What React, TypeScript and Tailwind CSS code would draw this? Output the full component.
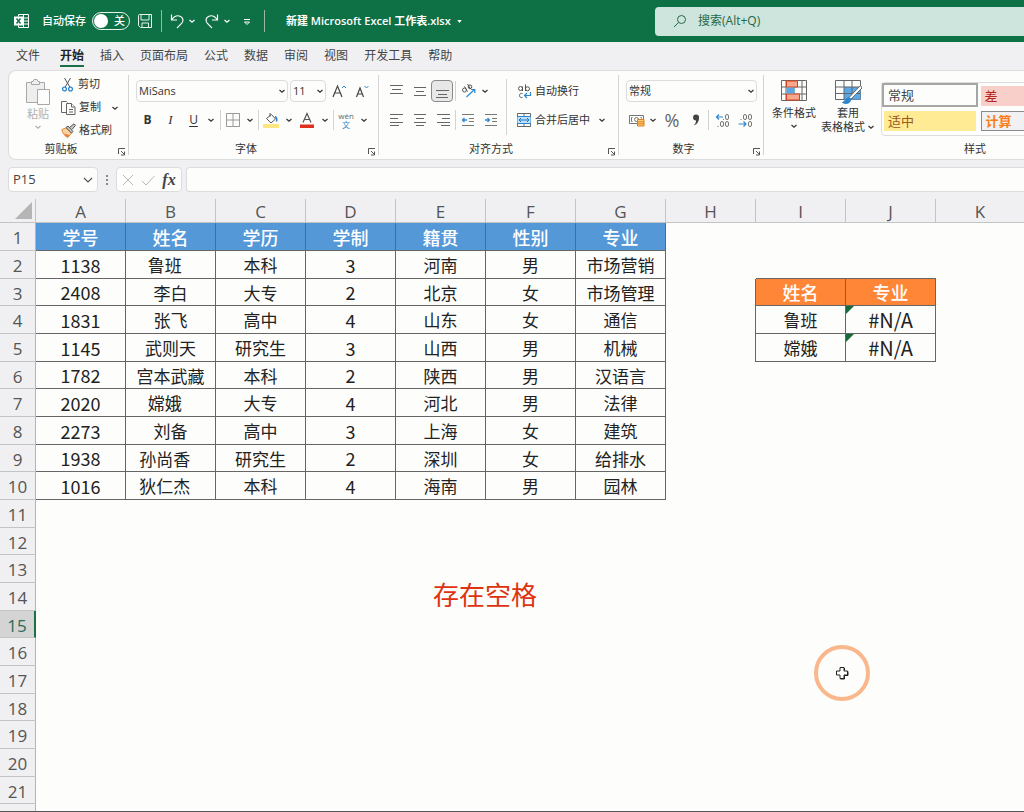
import clsx from 'clsx';
import { ReactNode, useState } from 'react';

const tabs = ['文件', '开始', '插入', '页面布局', '公式', '数据', '审阅', '视图', '开发工具', '帮助'];

const columns = ['A', 'B', 'C', 'D', 'E', 'F', 'G', 'H', 'I', 'J', 'K'];

// Trailing spaces are part of the data: they are why the lookup fails.
const students = [
    ['学号', '姓名', '学历', '学制', '籍贯', '性别', '专业'],
    ['1138', '鲁班   ', '本科', '3', '河南', '男', '市场营销'],
    ['2408', '李白', '大专', '2', '北京', '女', '市场管理'],
    ['1831', '张飞', '高中', '4', '山东', '女', '通信'],
    ['1145', '武则天', '研究生', '3', '山西', '男', '机械'],
    ['1782', '宫本武藏', '本科', '2', '陕西', '男', '汉语言'],
    ['2020', '嫦娥   ', '大专', '4', '河北', '男', '法律'],
    ['2273', '刘备', '高中', '3', '上海', '女', '建筑'],
    ['1938', '孙尚香   ', '研究生', '2', '深圳', '女', '给排水'],
    ['1016', '狄仁杰   ', '本科', '4', '海南', '男', '园林'],
];

const lookup = [
    ['姓名', '专业'],
    ['鲁班', '#N/A'],
    ['嫦娥', '#N/A'],
];

const rowNumbers = Array.from({ length: 21 }, (_, i) => i + 1);

// row is 1-based, col is 0-based
function getCell(row: number, col: number): string | undefined {
    return students[row - 1]?.[col] ?? lookup[row - 3]?.[col - 8];
}

function Chevron({ className }: { className?: string }) {
    return (
        <svg viewBox="0 0 8 8" className={clsx('h-2 w-2 shrink-0', className)} fill="none" stroke="currentColor" strokeWidth="1.2">
            <path d="M1.5 3 4 5.3 6.5 3" />
        </svg>
    );
}

function Divider({ className }: { className?: string }) {
    return <span className={clsx('w-px shrink-0 bg-[#d4d4d4]', className ?? 'h-5')} />;
}

function ToolButton({
    label,
    className,
    children,
}: {
    label: string;
    className?: string;
    children: ReactNode;
}) {
    return (
        <button
            type="button"
            aria-label={label}
            className={clsx('flex h-[22px] shrink-0 items-center justify-center rounded', className ?? 'w-[23px]')}
        >
            {children}
        </button>
    );
}

function More({ label, className }: { label: string; className?: string }) {
    return (
        <ToolButton label={label} className={className ?? 'w-3'}>
            <Chevron />
        </ToolButton>
    );
}

function SelectBox({ label, value, className }: { label: string; value: string; className: string }) {
    return (
        <div className={clsx('relative shrink-0', className)}>
            <select
                aria-label={label}
                defaultValue={value}
                className="h-[22px] w-full appearance-none rounded border border-[#dcdcdc] bg-[#fdfdfb] pl-[2px] outline-none"
            >
                <option>{value}</option>
            </select>
            <Chevron className="pointer-events-none absolute top-[7px] right-[2px]" />
        </div>
    );
}

function Group({
    title,
    className,
    launcher = true,
    children,
}: {
    title: string;
    className: string;
    launcher?: boolean;
    children: ReactNode;
}) {
    return (
        <section className={clsx('flex shrink-0', className)}>
            <div className="flex min-w-0 flex-1 flex-col pt-2">
                <div className="h-[60px]">{children}</div>
                <div className="flex h-5 items-center">
                    <span className="flex-1 pr-1 text-center">{title}</span>
                    {launcher && (
                        <button type="button" aria-label={`${title}设置`} className="mt-1 mr-[2px]">
                            <svg viewBox="0 0 9 9" className="h-[9px] w-[9px]" fill="none" stroke="#555">
                                <path d="M1.5 7V1.5H8M4 4l3.5 3.5M7.5 4.5v3.5H4" />
                            </svg>
                        </button>
                    )}
                </div>
            </div>
            {launcher && <Divider className="my-1 h-auto" />}
        </section>
    );
}

function Lines({ rows }: { rows: string }) {
    return (
        <svg viewBox="0 0 14 14" className="h-[14px] w-[14px]" fill="none" stroke="#666">
            <path d={rows} />
        </svg>
    );
}

function TitleBar() {
    const [autoSave, setAutoSave] = useState(false);

    return (
        <header className="flex h-[42px] shrink-0 items-center bg-[#0e7045] text-[11px] font-medium text-white">
            <div className="flex w-[655px] shrink-0 items-center pl-[14px]">
                <svg viewBox="0 0 16 16" className="h-4 w-4" fill="none" stroke="#fff">
                    <path d="M4.5 3.5v-2h10v13h-10v-2M4.5 5h10M9 8h5.5M9 11h5.5M9.5 1.5v13" />
                    <rect x="0" y="3.5" width="9" height="9" fill="#fff" stroke="none" />
                    <path d="m2.5 5.5 4 5M6.5 5.5l-4 5" stroke="#0e7045" strokeWidth="1.4" />
                </svg>
                <label className="ml-3 flex items-center">
                    自动保存
                    <input
                        type="checkbox"
                        checked={autoSave}
                        onChange={(e) => setAutoSave(e.target.checked)}
                        className="sr-only"
                    />
                    <span className="ml-[6px] flex h-[18px] w-[38px] items-center justify-between rounded-full border border-white/90 pr-1">
                        <span className="ml-px h-[14px] w-[14px] rounded-full bg-white" />
                        <span>{autoSave ? '开' : '关'}</span>
                    </span>
                </label>
                <ToolButton label="保存" className="ml-[7px] w-4">
                    <svg viewBox="0 0 16 16" className="h-4 w-4" fill="none" stroke="#fff" strokeOpacity=".9">
                        <path d="M1.5 2.5a1 1 0 0 1 1-1h12v13h-11l-2-2zM4 1.5v5.500h8V1.500M5 14.500V10h6.500v4.500" />
                    </svg>
                </ToolButton>
                <Divider className="ml-2 h-[22px] opacity-70" />
                <ToolButton label="撤消" className="ml-[7px] w-4">
                    <svg viewBox="0 0 16 16" className="h-4 w-4" fill="none" stroke="#fff" strokeWidth="1.2">
                        <path d="M2.500 1.500v5.500H8M2.500 7C5 3.500 8 2 11 3.200s4 4.600 1.800 7L8 15" />
                    </svg>
                </ToolButton>
                <More label="更多撤消" className="ml-px w-3" />
                <ToolButton label="恢复" className="ml-[6px] w-4">
                    <svg viewBox="0 0 16 16" className="h-4 w-4" fill="none" stroke="#fff" strokeWidth="1.2">
                        <path d="M13.500 1.500v5.500H8M13.500 7C11 3.500 8 2 5 3.200s-4 4.600-1.800 7L8 15" />
                    </svg>
                </ToolButton>
                <More label="更多恢复" className="ml-px w-3" />
                <ToolButton label="自定义快速访问工具栏" className="ml-2 w-3">
                    <svg viewBox="0 0 8 8" className="mt-px h-2 w-2" fill="none" stroke="#fff">
                        <path d="M1 1.500h6M1.500 4 4 6.500 6.500 4z" />
                    </svg>
                </ToolButton>
                <Divider className="ml-[11px] h-[22px] opacity-70" />
                <button type="button" className="ml-[21px] flex items-center font-semibold">
                    新建 Microsoft Excel 工作表.xlsx
                    <svg viewBox="0 0 6 4" className="ml-[6px] h-[3px] w-[5px]" fill="#fff">
                        <path d="M0 0h6L3 4z" />
                    </svg>
                </button>
            </div>
            <label className="flex h-[29px] flex-1 items-center rounded-l bg-[#cde5dc] pl-[18px] text-[#25674a]">
                <svg viewBox="0 0 14 14" className="h-[14px] w-[14px] shrink-0" fill="none" stroke="currentColor">
                    <circle cx="8.500" cy="5.500" r="4" />
                    <path d="M5.700 8.400 1 13" />
                </svg>
                <input
                    type="search"
                    aria-label="搜索"
                    placeholder="搜索(Alt+Q)"
                    className="ml-[11px] min-w-0 flex-1 bg-transparent text-xs font-normal outline-none placeholder:text-[#25674a]"
                />
            </label>
        </header>
    );
}

function ClipboardGroup() {
    return (
        <Group title="剪贴板" className="w-[120px]">
            <div className="flex">
                <button type="button" className="ml-[15px] flex w-7 flex-col items-center text-[#b0b0b0]">
                    <svg viewBox="0 0 26 27" className="h-[27px] w-[26px]" fill="#eeeeee" stroke="#a8a8a8">
                        <path d="M6 3.500H1.500v20h18v-20H15" />
                        <path d="M6.500 5.500v-3H8L9 .5h3l1 2h1.500v3z" />
                        <path d="M12.500 10.500h12v15h-12z" fill="#fdfdfb" />
                    </svg>
                    <span className="leading-4">粘贴</span>
                    <Chevron className="mt-px" />
                </button>
                <div className="-mt-1.5 ml-[9px] flex flex-col text-[#333]">
                    <button type="button" className="flex h-[23px] items-center gap-1">
                        <svg viewBox="0 0 13 15" className="h-[15px] w-[13px]" fill="none" stroke="#555">
                            <path d="m3.500 1 5.300 9M9.500 1 4.200 10" />
                            <circle cx="3.500" cy="12" r="1.900" stroke="#2f86d0" strokeWidth="1.300" />
                            <circle cx="9.500" cy="12" r="1.900" stroke="#2f86d0" strokeWidth="1.300" />
                        </svg>
                        剪切
                    </button>
                    <div className="flex h-[23px] items-center">
                        <button type="button" className="flex items-center gap-[3px]">
                            <svg viewBox="0 0 15 15" className="h-[15px] w-[15px]" fill="#fdfdfb" stroke="#666">
                                <path d="M5 12.500H.5V1.500H5.500l1 1" />
                                <path d="M5.500 3.500h5l3.500 3.500v7.500H5.500z" />
                                <path d="M10.500 3.500V7H14M8 9.500h4M8 12h4" />
                            </svg>
                            复制
                        </button>
                        <More label="复制选项" className="ml-2 w-3" />
                    </div>
                    <button type="button" className="flex h-[23px] items-center gap-[3px]">
                        <svg viewBox="0 0 15 15" className="h-[15px] w-[15px]" fill="none" stroke="#555">
                            <path d="M.8 6.500 5 5l5.500 5-3.500 4.500C4 13.500 1.500 10.500.8 6.500z" fill="#fbd0a0" stroke="#e08a3c" />
                            <path d="M3 10.500 8 12l-1.200 2.200C5.200 13.500 4 12 3 10.500z" fill="#e8792a" stroke="none" />
                            <path d="m5 4.500 2-1.500 5 5.500-1.500 1.500zM8.500 4.500 13 .8l1.500 1.500L11 6.500" fill="#c8c8c8" />
                        </svg>
                        格式刷
                    </button>
                </div>
            </div>
        </Group>
    );
}

function FontGroup() {
    return (
        <Group title="字体" className="w-[250px]">
            <div className="flex h-6 items-center pl-[7px]">
                <SelectBox label="字体" value="MiSans" className="w-[152px]" />
                <SelectBox label="字号" value="11" className="ml-[2px] w-9" />
                <ToolButton label="增大字号" className="ml-1 w-[18px]">
                    <svg viewBox="0 0 15 14" className="h-[14px] w-[15px]" fill="none" stroke="#444">
                        <path d="M1 13 5.500 2 10 13M2.500 9h6" strokeWidth="1.200" />
                        <path d="m10 4 2-2 2 2" stroke="#2f86d0" />
                    </svg>
                </ToolButton>
                <ToolButton label="减小字号" className="ml-0.5 w-6">
                    <svg viewBox="0 0 14 14" className="h-[14px] w-[14px]" fill="none" stroke="#444">
                        <path d="M1.500 13 5 4l3.500 9M2.500 10h5" strokeWidth="1.200" />
                        <path d="m9.500 2 2 2 2-2" stroke="#2f86d0" />
                    </svg>
                </ToolButton>
            </div>
            <div className="mt-1 flex h-[26px] items-center pl-[7px]">
                <ToolButton label="加粗">
                    <b className="text-xs">B</b>
                </ToolButton>
                <ToolButton label="倾斜">
                    <i className="font-['Liberation_Serif',serif] text-[13px]">I</i>
                </ToolButton>
                <ToolButton label="下划线">
                    <u className="text-xs underline-offset-2">U</u>
                </ToolButton>
                <More label="下划线样式" />
                <Divider className="ml-[3px] h-5" />
                <ToolButton label="边框">
                    <svg viewBox="0 0 14 14" className="h-[14px] w-[14px]" fill="none" stroke="#999">
                        <path d="M.5.5h13v13H.5zM7 .5v13M.5 7h13" />
                    </svg>
                </ToolButton>
                <More label="边框样式" />
                <Divider className="ml-0.5 h-5" />
                <ToolButton label="填充颜色" className="w-6">
                    <svg viewBox="0 0 16 16" className="h-4 w-4" fill="none" stroke="#555">
                        <path d="M0 12h16v4H0z" fill="#ffe680" stroke="none" />
                        <path d="m3.500 6.500 5-4 4 4.500-4.500 4zM7 1v3.500" />
                        <path d="M12 4.500c2 1 2 3 1.500 5" stroke="#2f86d0" strokeWidth="1.600" />
                    </svg>
                </ToolButton>
                <More label="更多填充颜色" />
                <ToolButton label="字体颜色" className="w-6">
                    <svg viewBox="0 0 16 16" className="h-4 w-4" fill="none" stroke="#555">
                        <path d="M1 12.500h14v3.500H1z" fill="#e0301e" stroke="none" />
                        <path d="m4 10.500 4-9 4 9M5.500 7.500h5" strokeWidth="1.200" />
                    </svg>
                </ToolButton>
                <More label="更多字体颜色" />
                <Divider className="ml-0.5 h-5" />
                <ToolButton label="拼音" className="w-6">
                    <span className="flex flex-col items-center text-[8px] leading-[9px] text-[#666]">
                        wén
                        <span className="text-[#2f86d0]">文</span>
                    </span>
                </ToolButton>
                <More label="拼音设置" />
            </div>
        </Group>
    );
}

function AlignGroup() {
    return (
        <Group title="对齐方式" className="w-[240px]">
            <div className="flex">
                <div>
                    <div className="flex h-6 items-center pl-[6px]">
                        <ToolButton label="顶端对齐">
                            <Lines rows="M0 1.500h13M2 5.500h9M0 9.500h13" />
                        </ToolButton>
                        <ToolButton label="垂直居中">
                            <Lines rows="M1 3.500h12M3 7.500h8M1 11.500h12" />
                        </ToolButton>
                        <button
                            type="button"
                            aria-label="底端对齐"
                            aria-pressed="true"
                            className="flex h-[22px] w-[22px] items-center justify-center rounded border border-[#8a8a8a] bg-[#e8e8e8]"
                        >
                            <Lines rows="M1 6.500h13M3 10.500h9M1 13.500h12" />
                        </button>
                        <Divider className="ml-0.5 h-5" />
                        <ToolButton label="方向" className="ml-px w-6">
                            <svg viewBox="0 0 16 16" className="h-4 w-4" fill="none" stroke="#555">
                                <circle cx="3.500" cy="7" r="2" />
                                <path d="m3.500 3.500 3 5" />
                                <path d="m6.500 1 3 5" />
                                <circle cx="9" cy="3.800" r="1.800" />
                                <path d="m5.500 14 8-7.500M10 6.500h3.800V10" stroke="#2f86d0" strokeWidth="1.200" />
                            </svg>
                        </ToolButton>
                        <More label="方向选项" className="w-2" />
                    </div>
                    <div className="mt-1 flex h-[26px] items-center pl-[6px]">
                        <ToolButton label="左对齐">
                            <Lines rows="M0 1.500h13M0 5.500h8M0 9.500h13M0 12.500h9" />
                        </ToolButton>
                        <ToolButton label="居中">
                            <Lines rows="M1 1.500h12M3 5.500h8M1 9.500h12M3 12.500h8" />
                        </ToolButton>
                        <ToolButton label="右对齐">
                            <Lines rows="M1 1.500h13M6 5.500h8M1 9.500h13M5 12.500h9" />
                        </ToolButton>
                        <Divider className="ml-px h-5" />
                        <ToolButton label="减少缩进量">
                            <svg viewBox="0 0 14 14" className="h-[14px] w-[14px]" fill="none" stroke="#777">
                                <path d="M1 1.500h12M8 5.500h5M8 8.500h5M1 12.500h12" />
                                <path d="M6 7H1.500M3.500 5l-2 2 2 2" stroke="#2f86d0" strokeWidth="1.300" />
                            </svg>
                        </ToolButton>
                        <ToolButton label="增加缩进量">
                            <svg viewBox="0 0 14 14" className="h-[14px] w-[14px]" fill="none" stroke="#777">
                                <path d="M1 1.500h12M8 5.500h5M8 8.500h5M1 12.500h12" />
                                <path d="M1 7h4.500M3.500 5l2 2-2 2" stroke="#2f86d0" strokeWidth="1.300" />
                            </svg>
                        </ToolButton>
                    </div>
                </div>
                <Divider className="ml-1 h-14" />
                <div className="ml-[10px]">
                    <button type="button" className="flex h-6 items-center gap-[3px]">
                        <svg viewBox="0 0 15 15" className="h-[15px] w-[15px]" fill="none" stroke="#555">
                            <circle cx="3.500" cy="4.500" r="2" />
                            <path d="M5.500 2.500v4.500M8.500.5v6.500M5.500 9.500c-4-1-4 5 0 4" />
                            <circle cx="10.500" cy="4.800" r="2" />
                            <path d="M13.500 8v3.500H8M10 9l-2.500 2.500L10 14" stroke="#2f86d0" strokeWidth="1.200" />
                        </svg>
                        自动换行
                    </button>
                    <div className="mt-1 flex h-[26px] items-center">
                        <button type="button" className="flex items-center gap-1">
                            <svg viewBox="0 0 14 14" className="h-[14px] w-[14px]" fill="none" stroke="#666">
                                <path d="M.5.5h13v13H.5zM7 .5V3M7 11v2.500" />
                                <path d="M0 3.500h14v7H0z" fill="#bfe0f7" stroke="#2f86d0" />
                                <path d="M2 7h10M4 5 2 7l2 2M10 5l2 2-2 2" stroke="#1f74bf" />
                            </svg>
                            合并后居中
                        </button>
                        <More label="合并选项" className="ml-1 w-4" />
                    </div>
                </div>
            </div>
        </Group>
    );
}

function NumberGroup() {
    return (
        <Group title="数字" className="w-[145px]">
            <div className="flex h-6 items-center pl-[7px]">
                <SelectBox label="数字格式" value="常规" className="w-[131px]" />
            </div>
            <div className="mt-1 flex h-[26px] items-center pl-[7px]">
                <ToolButton label="会计数字格式" className="w-[22px]">
                    <svg viewBox="0 0 16 14" className="h-[14px] w-4" fill="none" stroke="#777">
                        <path d="M.5 2.500h14v8H.5z" />
                        <path d="M3.500 4.500H2.500v4h1M11.500 4.500h1v1" />
                        <circle cx="7.500" cy="6.500" r="2" />
                        <path d="M8.500 6.500h6.500v6.500H8.500z" fill="#ffd27a" stroke="#e07b1a" />
                        <path d="M8.500 8.800h6.500M8.500 10.900h6.500" stroke="#e07b1a" />
                    </svg>
                </ToolButton>
                <More label="更多会计格式" className="w-[10px]" />
                <ToolButton label="百分比样式" className="w-7">
                    <span className="text-lg text-[#666]">%</span>
                </ToolButton>
                <ToolButton label="千位分隔样式" className="w-5">
                    <svg viewBox="0 0 8 12" className="h-3 w-2" fill="#444">
                        <path d="M4 .5a3 3 0 0 1 3 3.200C7 7.500 5 10.500 1.500 11.500c1.600-1.400 2.500-3 2.600-5A3 3 0 0 1 4 .5z" />
                    </svg>
                </ToolButton>
                <Divider className="ml-0.5 h-5" />
                <ToolButton label="增加小数位数" className="ml-px w-6">
                    <svg viewBox="0 0 15 15" className="h-[15px] w-[15px]" fill="none" stroke="#777">
                        <rect x="10.500" y="1.500" width="3" height="5" rx="1.500" />
                        <rect x="5.500" y="8.500" width="3" height="5" rx="1.500" />
                        <rect x="10.500" y="8.500" width="3" height="5" rx="1.500" />
                        <path d="M3 13v1M8.500 6v1" />
                        <path d="M8 4H1.500M4 1.500 1.500 4 4 6.500" stroke="#2f86d0" strokeWidth="1.200" />
                    </svg>
                </ToolButton>
                <ToolButton label="减少小数位数">
                    <svg viewBox="0 0 15 15" className="h-[15px] w-[15px]" fill="none" stroke="#777">
                        <rect x="5.500" y="1.500" width="3" height="5" rx="1.500" />
                        <rect x="10.500" y="1.500" width="3" height="5" rx="1.500" />
                        <rect x="10.500" y="8.500" width="3" height="5" rx="1.500" />
                        <path d="M3 6v1" />
                        <path d="M.5 11H8M5.500 8.500 8 11l-2.500 2.500" stroke="#2f86d0" strokeWidth="1.200" />
                    </svg>
                </ToolButton>
            </div>
        </Group>
    );
}

function StylesGroup() {
    return (
        <Group title="样式" className="w-[426px]" launcher={false}>
            <div className="flex">
                <button type="button" className="ml-1 flex w-[52px] flex-col items-center">
                    <svg viewBox="0 0 26 21" className="mt-px h-[21px] w-[26px]" fill="none" stroke="#666">
                        <path d="M.5.5h25v20H.5zM.5 7h25M.5 14h25M5 .5v20M13 .5v20M21 .5v20" />
                        <path d="M5.500 1h11v6h-11zM5.500 14h13v6h-13z" fill="#f7a78b" stroke="#d8431f" />
                        <path d="M5.500 7.500h8v6h-8z" fill="#5aa9e6" stroke="none" />
                    </svg>
                    <span className="mt-1 leading-4">条件格式</span>
                    <Chevron className="mt-px" />
                </button>
                <button type="button" className="ml-px flex w-[54px] flex-col items-center">
                    <svg viewBox="0 0 27 25" className="mt-px h-[25px] w-[27px]" fill="none" stroke="#666">
                        <path d="M.5.5h25v19H.5z" />
                        <path d="M9 7h16.500v12.500H9z" fill="#5aa9e6" stroke="none" />
                        <path d="M.5 7h25M.5 13.500h25M9 .5v19M17 .5v19" />
                        <path d="M25.500 5.500 14 17.500l1.800 1.800L27 8z" fill="#fff" />
                        <path d="M14 17.500c-3 0-3 3.500-6.500 5 3.500 2 8 1 8.300-3.200z" fill="#2f86d0" stroke="#2f86d0" />
                    </svg>
                    <span className="leading-4">套用</span>
                    <span className="flex items-center leading-3 whitespace-nowrap">
                        表格格式
                        <Chevron className="ml-[2px]" />
                    </span>
                </button>
                <div className="mt-[3px] ml-[6px] grid h-[54px] w-[196px] grid-cols-2 grid-rows-[24px_24px] gap-x-[3px] gap-y-1 rounded border border-[#dcdcdc] text-[13px] leading-none">
                    <button type="button" className="h-6 border-2 border-[#a6a6a6] pl-1 text-left text-[#444]">
                        常规
                    </button>
                    <button type="button" className="mt-[3px] h-5 bg-[#f9cfc9] pl-1 text-left text-[#b3261a]">
                        差
                    </button>
                    <button type="button" className="mx-[2px] h-5 bg-[#ffeb94] pl-1 text-left text-[#9c5a1c]">
                        适中
                    </button>
                    <button type="button" className="h-5 border border-[#8a8a8a] bg-[#f1f1f3] pl-1 text-left font-bold text-[#fa7d1c]">
                        计算
                    </button>
                </div>
            </div>
        </Group>
    );
}

function FormulaBar() {
    return (
        <div className="mt-[7px] ml-2 flex h-[25px] shrink-0 text-[#444]">
            <label className="flex w-[90px] items-center rounded border border-[#dcdcdc] bg-[#fdfdfb] pr-1 pl-1">
                <input aria-label="名称框" defaultValue="P15" className="w-full min-w-0 bg-transparent text-[13px] outline-none" />
                <svg viewBox="0 0 10 10" className="h-[10px] w-[10px] shrink-0" fill="none" stroke="#555" strokeWidth="1.200">
                    <path d="m1 3 4 4 4-4" />
                </svg>
            </label>
            <svg viewBox="0 0 18 25" className="w-[18px]" fill="#888">
                <path d="M8 8h2v2H8zM8 12h2v2H8zM8 16h2v2H8z" />
            </svg>
            <div className="flex w-[66px] items-center justify-between rounded border border-[#dcdcdc] bg-[#fdfdfb] px-1">
                <button type="button" aria-label="取消">
                    <svg viewBox="0 0 14 14" className="h-[14px] w-[14px]" fill="none" stroke="#b8b8b8">
                        <path d="m2 2 10 10M12 2 2 12" />
                    </svg>
                </button>
                <button type="button" aria-label="输入">
                    <svg viewBox="0 0 14 14" className="h-[14px] w-[14px]" fill="none" stroke="#b8b8b8">
                        <path d="m1 8 4 4 8.500-9" />
                    </svg>
                </button>
                <button type="button" aria-label="插入函数" className="w-4 font-['Liberation_Serif',serif] text-base leading-none font-bold italic">
                    fx
                </button>
            </div>
            <input
                aria-label="编辑栏"
                className="ml-1 min-w-0 flex-1 rounded-l border border-r-0 border-[#dcdcdc] bg-[#fdfdfb] px-2 text-[13px] outline-none"
            />
        </div>
    );
}

function Cell({ row, col }: { row: number; col: number }) {
    const value = getCell(row, col);
    const isHeader = value !== undefined && (row === 1 || (row === 3 && col > 7));
    const isError = value === '#N/A';

    return (
        <td
            className={clsx(
                'relative p-0 text-center leading-none whitespace-pre',
                isHeader ? 'text-white' : 'text-[#222]',
                (value || getCell(row, col + 1)) && 'border-r border-r-[#666]',
                (value || getCell(row + 1, col)) && 'border-b border-b-[#666]',
                isHeader && 'text-lg font-medium',
                isHeader && (row === 1 ? 'bg-[#5498d8]' : 'bg-[#ff8636]'),
                !isHeader && isError && 'text-xl',
                !isHeader && !isError && (/^\d+$/.test(value ?? '') ? 'text-lg' : 'text-[17px]'),
            )}
        >
            {value}
            {isError && (
                <svg viewBox="0 0 8 8" className="absolute top-0 left-0 h-2 w-2" fill="#176b3a">
                    <path d="M0 0h8L0 8z" />
                </svg>
            )}
        </td>
    );
}

function Sheet() {
    return (
        <main className="relative mt-[7px] min-h-0 flex-1 overflow-hidden border-b border-[#555] bg-[#fdfdfb] font-['Noto_Sans_CJK_SC',sans-serif]">
            <table className="w-full table-fixed border-separate border-spacing-0">
                <colgroup>
                    <col className="w-9" />
                    {columns.map((name) => (
                        <col key={name} className={name === 'K' ? undefined : 'w-[90px]'} />
                    ))}
                </colgroup>
                <thead>
                    <tr className="h-6 bg-[#f0f0f2] font-['Open_Sans',sans-serif] text-[17px] text-[#555]">
                        <th className="border-r border-b border-[#c4c4c4] p-0">
                            <svg viewBox="0 0 17 17" className="mr-[3px] ml-auto h-[17px] w-[17px]" fill="#b5b5b5">
                                <path d="M17 0v17H0z" />
                            </svg>
                        </th>
                        {columns.map((name) => (
                            <th
                                key={name}
                                className={clsx(
                                    'border-b border-[#c4c4c4] p-0 pt-0.5 leading-none font-normal',
                                    name !== 'K' && 'border-r',
                                )}
                            >
                                {name}
                            </th>
                        ))}
                    </tr>
                </thead>
                <tbody>
                    {rowNumbers.map((row) => (
                        <tr key={row} className={row % 3 === 0 ? 'h-[27px]' : 'h-7'}>
                            <th
                                className={clsx(
                                    "border-b border-b-[#c4c4c4] p-0 pt-0.5 font-['Open_Sans',sans-serif] text-[17px] leading-none font-normal",
                                    row === 15
                                        ? 'border-r-2 border-r-[#1c7048] bg-[#d3d4d3] text-[#2c6b5c]'
                                        : 'border-r border-r-[#b4b4b4] bg-[#f0f0f2] text-[#555]',
                                )}
                            >
                                {row}
                            </th>
                            {columns.map((name, col) => (
                                <Cell key={name} row={row} col={col} />
                            ))}
                        </tr>
                    ))}
                    <tr className="h-7">
                        <td className="border-r border-r-[#b4b4b4] bg-[#f0f0f2]" />
                        <td colSpan={columns.length} />
                    </tr>
                </tbody>
            </table>

            {/* text box and pointer float over the grid */}
            <p className="absolute top-[379px] left-[433px] text-[26px] leading-8 text-[#dd3311]">存在空格</p>
            <div className="absolute top-[446px] left-[814px] flex h-14 w-14 items-center justify-center rounded-full border-4 border-[#fbb78c]">
                <svg viewBox="0 0 14 14" className="h-[14px] w-[14px]" fill="#fff" stroke="#222">
                    <path d="M5 1.500h4V5h3.500v4H9v3.500H5V9H1.500V5H5z" />
                    <path d="M9.500 2v2.500M13 5.500v4H9.500V13h-4" fill="none" />
                </svg>
            </div>
        </main>
    );
}

export default function App() {
    return (
        <div className="flex h-screen flex-col overflow-hidden bg-[#f0f0f2] font-['Open_Sans','Noto_Sans_CJK_SC',sans-serif] text-[11px] text-[#333]">
            <TitleBar />
            <nav className="flex h-7 shrink-0 items-center gap-4 pl-4 text-xs text-[#444]">
                {tabs.map((tab) => (
                    <button
                        key={tab}
                        type="button"
                        className={clsx(
                            'h-[22px] shrink-0 border-b-2 pt-0.5',
                            tab === '文件' && 'mr-1',
                            tab === '开始' ? 'border-[#1c7048] font-bold text-[#222]' : 'border-transparent',
                        )}
                    >
                        {tab}
                    </button>
                ))}
            </nav>
            <div className="ml-2 flex h-[90px] shrink-0 overflow-hidden rounded-l-lg border border-r-0 border-[#dcdcdc] bg-[#fdfdfb]">
                <ClipboardGroup />
                <FontGroup />
                <AlignGroup />
                <NumberGroup />
                <StylesGroup />
            </div>
            <FormulaBar />
            <Sheet />
        </div>
    );
}
